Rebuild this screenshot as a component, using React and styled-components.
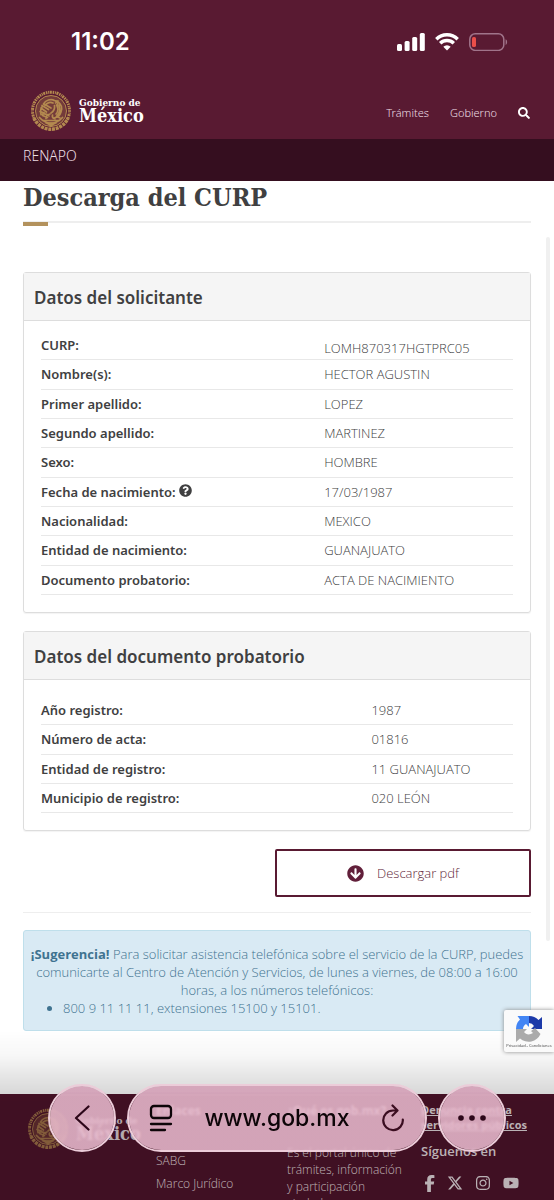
import React from 'react'
import styled, { createGlobalStyle } from 'styled-components'
import { FaSearch, FaInstagram, FaYoutube, FaQuestionCircle, FaArrowCircleDown } from 'react-icons/fa'
import { FaXTwitter } from 'react-icons/fa6'

const applicant = [
    { label: 'CURP:', value: 'LOMH870317HGTPRC05' },
    { label: 'Nombre(s):', value: 'HECTOR AGUSTIN' },
    { label: 'Primer apellido:', value: 'LOPEZ' },
    { label: 'Segundo apellido:', value: 'MARTINEZ' },
    { label: 'Sexo:', value: 'HOMBRE' },
    { label: 'Fecha de nacimiento:', value: '17/03/1987', help: true },
    { label: 'Nacionalidad:', value: 'MEXICO' },
    { label: 'Entidad de nacimiento:', value: 'GUANAJUATO' },
    { label: 'Documento probatorio:', value: 'ACTA DE NACIMIENTO' },
]

const certificate = [
    { label: 'Año registro:', value: '1987' },
    { label: 'Número de acta:', value: '01816' },
    { label: 'Entidad de registro:', value: '11 GUANAJUATO' },
    { label: 'Municipio de registro:', value: '020 LEÓN' },
]

const Seal = () => (
    <SealSvg viewBox="0 0 84 84" fill="none" stroke="currentColor" aria-hidden="true">
        <circle cx="42" cy="42" r="31" fill="currentColor" fillOpacity=".3" stroke="none" />
        <path d="M10 60A37 37 0 1 1 74 60" strokeWidth="6" strokeDasharray="3 1.6 2 1.2 4 1.6" />
        <path d="M8 56A37 37 0 0 0 76 56" strokeWidth="7" strokeDasharray="6 1.5" />
        <circle cx="42" cy="42" r="31" strokeWidth="2" />
        <g strokeWidth="3.4" strokeLinecap="round">
            <path d="M27 28c4-8 15-11 22-7 6 3 8 8 6 13M30 31c4-6 11-8 16-5M48 21l7 1-4 4" />
            <path d="M55 23c7 5 10 13 7 21-2 7-8 11-14 12M53 30c4 5 4 13-1 18M58 31c3 7 1 15-4 20M49 31c1 7-2 12-7 15" />
            <path d="M25 32c-4 6-5 11-3 17 6-2 12-1 16 3M22 36l11 8M24 31l13 8M28 28l14 8M20 43l9 3" />
            <path d="M40 48c-5 1-8 5-8 9M45 50c-1 4 1 7 5 8M53 53l7 3M35 55l-10-4" />
            <path d="M19 55c7 8 15 11 23 11s16-3 23-11M27 61h30M31 65c6 4 16 4 22 0" />
        </g>
        <path d="M36 69l6-4 6 4-6 5z" fill="currentColor" />
    </SealSvg>
)

const Brand = ({ faded }) => (
    <BrandLink href="#inicio" $faded={faded}>
        <Seal />
        <BrandName>
            <small>Gobierno de</small>
            <strong>México</strong>
        </BrandName>
    </BrandLink>
)

const DataPanel = ({ title, rows, split, space, lowFirst }) => (
    <Panel>
        <PanelTitle>{title}</PanelTitle>
        <PanelBody $space={space}>
            <DataTable $split={split} $rows={rows.length} $lowFirst={lowFirst}>
                <tbody>
                    {rows.map((row) => <tr key={row.label}>
                        <th scope="row">{row.label}{row.help && <FaQuestionCircle />}</th>
                        <td>{row.value}</td>
                    </tr>)}
                </tbody>
            </DataTable>
        </PanelBody>
    </Panel>
)

const App = () => {
  return (
    <>
        <GlobalStyle />
        <Page>
            <StatusBar>
                <time>11:02</time>
                <StatusIcons>
                    <svg width="28" height="18" viewBox="0 0 28 18" fill="#fff">
                        <rect x="0" y="11" width="5" height="7" rx="1.5" />
                        <rect x="7.6" y="8" width="5" height="10" rx="1.5" />
                        <rect x="15.2" y="4" width="5" height="14" rx="1.5" />
                        <rect x="22.8" y="0" width="5" height="18" rx="1.5" />
                    </svg>
                    <svg width="24" height="18" viewBox="0 0 24 18" fill="none" stroke="#fff" strokeWidth="3.4">
                        <path d="M1.3 6.2a15.2 15.2 0 0 1 21.4 0M5.2 10.3a9.6 9.6 0 0 1 13.6 0" />
                        <path d="M12 17.5l-3.7-3.8a5.3 5.3 0 0 1 7.4 0z" fill="#fff" stroke="none" />
                    </svg>
                    <svg width="39" height="18" viewBox="0 0 39 18" fill="none">
                        <rect x=".8" y=".8" width="34" height="16.6" rx="5.4" stroke="#a0748a" strokeWidth="1.5" />
                        <path d="M36.6 6.3c2 .7 2 4.9 0 5.6z" fill="#a0748a" />
                        <rect x="3" y="4" width="4" height="10" rx="1.6" fill="#eb4e4a" />
                    </svg>
                </StatusIcons>
            </StatusBar>
            <Header>
                <Brand />
                <Nav>
                    <a href="#tramites">Trámites</a>
                    <a href="#gobierno">Gobierno</a>
                    <a href="#buscar" aria-label="Buscar"><FaSearch /></a>
                </Nav>
            </Header>
            <SubBar><a href="#renapo">RENAPO</a></SubBar>
            <Main>
                <Title>Descarga del CURP</Title>
                <DataPanel title="Datos del solicitante" rows={applicant} split="60%" space="10px 17px 17px" lowFirst />
                <DataPanel title="Datos del documento probatorio" rows={certificate} split="70%" space="16px 17px 17px" />
                <Download type="button"><FaArrowCircleDown />Descargar pdf</Download>
                <Rule />
                <Notice>
                    <p><b>¡Sugerencia!</b> Para solicitar asistencia telefónica sobre el servicio de la CURP, puedes comunicarte al Centro de Atención y Servicios, de lunes a viernes, de 08:00 a 16:00 horas, a los números telefónicos:</p>
                    <ul><li>800 9 11 11 11, extensiones 15100 y 15101.</li></ul>
                </Notice>
                <ScrollThumb />
            </Main>
            <Footer>
                <Brand faded />
                <FooterColumn>
                    <h2>Enlaces</h2>
                    <FooterLinks>
                        <a href="#sabg">SABG</a>
                        <a href="#marco">Marco Jurídico</a>
                    </FooterLinks>
                </FooterColumn>
                <FooterColumn>
                    <h2>¿Qué es gob.mx?</h2>
                    <p>Es el portal único de trámites, información y participación ciudadana.</p>
                </FooterColumn>
                <FooterColumn>
                    <Report href="#denuncia">Denuncia contra servidores públicos</Report>
                    <h3>Síguenos en</h3>
                    <Social>
                        <a href="#facebook" aria-label="Facebook">
                            <svg width="10" height="17" viewBox="0 0 10 17" fill="currentColor"><path d="M2.200 17V9.600H0V6.500h2.200V4.600C2.200 1.600 3.700 0 6.600 0c1 0 2 .1 2.800.2v2.700H7.700c-1.400 0-1.800.7-1.800 1.700v1.900h3.300l-.5 3.100H5.900V17z" /></svg>
                        </a>
                        <a href="#x" aria-label="X"><FaXTwitter /></a>
                        <a href="#instagram" aria-label="Instagram"><FaInstagram /></a>
                        <a href="#youtube" aria-label="YouTube"><FaYoutube /></a>
                    </Social>
                </FooterColumn>
            </Footer>
        </Page>
        <Shade />
        <Captcha>
            <svg width="28" height="28" viewBox="0 0 28 28">
                <path d="M14 1a13 13 0 0 1 9.500 4L27 2v12H16l3-3a6.500 6.500 0 0 0-5-3z" fill="#1c3aa9" />
                <path d="M14 1v11l-3-3c-2 1-3 3-3 5H1A13 13 0 0 1 5 4.500L2.500 1z" fill="#4285f4" />
                <path d="M1 14h11l-3 3c2 3 6 3 9 1l-2-2 4-3 5.500 6A13 13 0 0 1 5 23.500L1 27z" fill="#ababab" />
            </svg>
            <span>Privacidad - Condiciones</span>
        </Captcha>
        <BrowserBar>
            <RoundButton type="button" aria-label="Atrás">
                <svg width="16" height="26" viewBox="0 0 16 26" fill="none" stroke="#2c0719" strokeWidth="2.200" strokeLinecap="round" strokeLinejoin="round"><path d="M14.500 1.500L2 13l12.500 11.500" /></svg>
            </RoundButton>
            <AddressPill>
                <button type="button" aria-label="Vista de lectura">
                    <svg width="24" height="28" viewBox="0 0 24 28" fill="none" stroke="currentColor" strokeWidth="2.300" strokeLinecap="round"><rect x="2" y="2" width="20" height="12" rx="3" /><path d="M2 20h20M2 26h14" /></svg>
                </button>
                <a href="#direccion">www.gob.mx</a>
                <button type="button" aria-label="Recargar">
                    <svg width="24" height="28" viewBox="0 0 24 28" fill="none" stroke="#3a0d20" strokeWidth="2.200" strokeLinecap="round" strokeLinejoin="round"><path d="M21.800 15.500A9.800 9.800 0 1 1 12 6.500h4M11.500 1.500l5 5-5 5" /></svg>
                </button>
            </AddressPill>
            <RoundButton type="button" aria-label="Más">
                <svg width="28" height="6" viewBox="0 0 28 6" fill="#2c0719"><circle cx="3" cy="3" r="2.800" /><circle cx="14" cy="3" r="2.800" /><circle cx="25" cy="3" r="2.800" /></svg>
            </RoundButton>
        </BrowserBar>
    </>
  )
}

const GlobalStyle = createGlobalStyle`
    * {
        box-sizing: border-box;
    }
    body {
        margin: 0;
        font-family: "Open Sans", "Noto Sans", sans-serif;
        font-size: 13px;
        font-weight: 300;
        line-height: 18px;
        color: #404041;
        background: #fff;
    }
    a {
        color: inherit;
        text-decoration: none;
    }
    h1, h2, h3, p, ul {
        margin: 0;
    }
    button {
        font: inherit;
        color: inherit;
        padding: 0;
    }
    svg {
        flex: none;
    }
`
const Page = styled.div`
    height: 100vh;
    overflow-y: auto;
    scrollbar-width: none;
`
const StatusBar = styled.div`
    display: flex;
    align-items: center;
    justify-content: space-between;
    height: 83px;
    padding: 0 46px 0 71px;
    background: #591a32;
    color: #fff;
    time {
        font-family: Inter, sans-serif;
        font-size: 24px;
        font-weight: 600;
    }
`
const StatusIcons = styled.div`
    display: flex;
    gap: 10px;
`
const Header = styled.header`
    display: flex;
    align-items: center;
    justify-content: space-between;
    height: 56px;
    padding: 0 24px 0 30px;
    background: #591a32;
`
const BrandLink = styled.a`
    display: flex;
    align-items: center;
    gap: 7px;
    color: #fff;
    opacity: ${({ $faded }) => ($faded ? 0.8 : 1)};
`
const SealSvg = styled.svg`
    width: 42px;
    height: 42px;
    color: #b3894f;
`
const BrandName = styled.span`
    display: flex;
    flex-direction: column;
    font-family: "DejaVu Serif Condensed", "DejaVu Serif", serif;
    font-weight: 700;
    white-space: nowrap;
    small {
        font-size: 10px;
        line-height: 10px;
    }
    strong {
        font-size: 18px;
        line-height: 16px;
    }
`
const Nav = styled.nav`
    display: flex;
    align-items: center;
    gap: 21px;
    padding-top: 4px;
    font-family: "Noto Sans", sans-serif;
    font-size: 11px;
    color: #ecdde3;
    svg {
        display: block;
        font-size: 12px;
        color: #fff;
    }
`
const SubBar = styled.nav`
    height: 42px;
    padding: 8px 23px;
    background: #350e1f;
    color: #ecdde3;
    font-family: "Noto Sans", sans-serif;
    font-size: 14px;
`
const Main = styled.main`
    display: flow-root;
    position: relative;
    padding: 0 23px;
    margin-bottom: 63px;
`
const Title = styled.h1`
    position: relative;
    height: 42px;
    margin-bottom: 49px;
    border-bottom: 2px solid #eee;
    font-family: "DejaVu Serif Condensed", "DejaVu Serif", serif;
    font-size: 25px;
    line-height: 34px;
    &::after {
        content: "";
        position: absolute;
        left: 0;
        bottom: -5px;
        width: 25px;
        height: 4px;
        background: #b3925d;
    }
`
const Panel = styled.section`
    margin-bottom: 18px;
    border: 1px solid #ddd;
    border-radius: 3px;
    box-shadow: 0 1px 1px rgba(0, 0, 0, 0.05);
`
const PanelTitle = styled.h2`
    padding: 12px 10px 10px;
    border-bottom: 1px solid #ddd;
    background: #f5f5f5;
    font-family: "Noto Sans", sans-serif;
    font-size: 17px;
    font-weight: 600;
    line-height: 25px;
`
const PanelBody = styled.div`
    padding: ${({ $space }) => $space};
`
const DataTable = styled.table`
    width: 100%;
    height: ${({ $rows }) => Math.round($rows * 29.35)}px;
    table-layout: fixed;
    border-collapse: separate;
    border-spacing: 0;
    tr {
        height: 29px;
    }
    th, td {
        padding: 0;
        border-bottom: 1px solid #e8e8e8;
        text-align: left;
    }
    th {
        width: ${({ $split }) => $split};
        font-family: "Noto Sans", sans-serif;
        font-weight: 600;
    }
    tr:first-child td {
        padding-top: ${({ $lowFirst }) => ($lowFirst ? '6px' : '0')};
    }
    svg {
        margin-left: 3px;
    }
`
const Download = styled.button`
    display: flex;
    align-items: center;
    justify-content: center;
    gap: 13px;
    width: 256px;
    height: 48px;
    margin-left: auto;
    border: 2px solid #591a32;
    border-radius: 2px;
    background: #fff;
    color: #611f3a;
    svg {
        font-size: 17px;
    }
`
const Rule = styled.hr`
    margin: 15px 0 17px;
    border: 0;
    border-top: 1px solid #eee;
`
const Notice = styled.section`
    padding: 14px 3px 13px;
    border: 1px solid #bfdfeb;
    border-radius: 3px;
    background: #d9eaf4;
    color: #3f7390;
    text-align: center;
    ul {
        padding-left: 36px;
        text-align: left;
    }
    b {
        font-weight: 700;
    }
`
const ScrollThumb = styled.span`
    position: absolute;
    top: 56px;
    right: 4px;
    bottom: 90px;
    width: 4px;
    border-radius: 2px;
    background: #f0f0f0;
`
const Footer = styled.footer`
    display: grid;
    grid-template-columns: 119px 121px 124px 1fr;
    gap: 10px;
    align-items: start;
    padding: 8px 27px 40px;
    background: #4f142b;
    color: #e3d9dd;
    font-size: 12px;
    line-height: 17px;
    & > ${BrandLink} {
        padding-top: 6px;
    }
`
const FooterColumn = styled.div`
    h2 {
        margin-bottom: 24px;
        font-size: 12px;
        line-height: 18px;
        white-space: nowrap;
    }
    h3 {
        margin: 10px 0 15px;
        font-size: 13px;
        font-weight: 600;
        line-height: 18px;
    }
    p {
        padding-right: 4px;
    }
`
const FooterLinks = styled.div`
    display: flex;
    flex-direction: column;
    gap: 6px;
    padding-top: 8px;
`
const Report = styled.a`
    display: block;
    margin-right: -10px;
    font-size: 11px;
    font-weight: 700;
    line-height: 15px;
    text-decoration: underline;
`
const Social = styled.div`
    display: flex;
    gap: 12px;
    padding-left: 4px;
    font-size: 16px;
    svg {
        display: block;
    }
`
const Captcha = styled.aside`
    position: fixed;
    right: 0;
    bottom: 148px;
    display: flex;
    flex-direction: column;
    align-items: center;
    width: 50px;
    height: 42px;
    padding-top: 5px;
    border-radius: 2px 0 0 2px;
    background: #fafafa;
    box-shadow: 0 0 4px #888;
    span {
        font-size: 4px;
        font-weight: 400;
        line-height: 5px;
        white-space: nowrap;
    }
`
const Shade = styled.div`
    position: fixed;
    right: 0;
    bottom: 0;
    left: 0;
    height: 170px;
    background: linear-gradient(rgba(0, 0, 0, 0), rgba(0, 0, 0, 0.03) 15%, rgba(0, 0, 0, 0.18) 42%, rgba(0, 0, 0, 0.18));
    pointer-events: none;
`
const BrowserBar = styled.div`
    position: fixed;
    right: 0;
    bottom: 48px;
    left: 0;
    display: flex;
    gap: 11px;
    padding: 0 48px;
`
const glass = 'linear-gradient(rgba(212, 158, 182, 0.86) 7px, rgba(235, 188, 208, 0.86) 9px)'
const RoundButton = styled.button`
    display: flex;
    align-items: center;
    justify-content: center;
    width: 68px;
    height: 68px;
    border: 2px solid #ecccd9;
    border-radius: 50%;
    background: ${glass};
    background-clip: padding-box;
    backdrop-filter: blur(1px);
`
const AddressPill = styled.div`
    display: flex;
    flex: 1;
    align-items: center;
    justify-content: space-between;
    height: 68px;
    padding: 0 20px;
    border: 2px solid #ecccd9;
    border-radius: 34px;
    background: ${glass};
    background-clip: padding-box;
    backdrop-filter: blur(1px);
    color: #0d0508;
    a {
        font-family: Inter, sans-serif;
        font-size: 23px;
        font-weight: 500;
    }
    button {
        display: flex;
        border: 0;
        background: none;
    }
`

export default App
